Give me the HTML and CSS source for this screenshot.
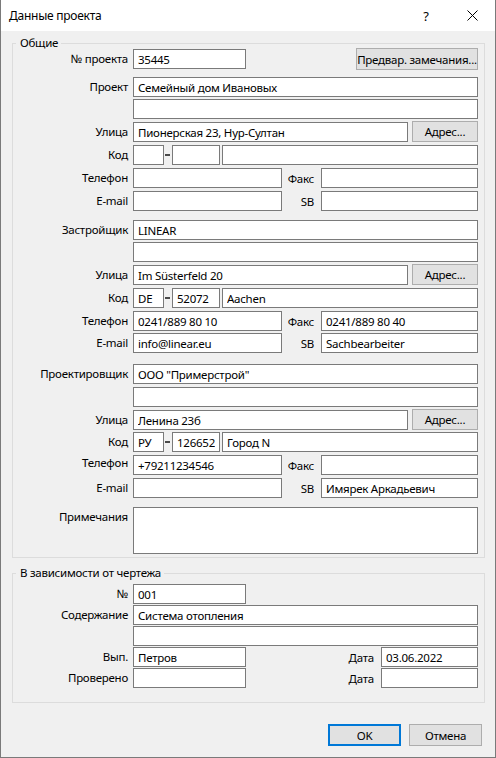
FILE: index.html
```html
<!DOCTYPE html>
<html lang="ru">
<head>
<meta charset="utf-8">
<title>Данные проекта</title>
<link rel="stylesheet" href="styles.css">
</head>
<body>
<div class="window">
  <div class="titlebar">
    <span class="title">Данные проекта</span>
    <span class="cap help">?</span>
    <span class="cap"><svg class="close" width="11" height="11" viewBox="0 0 11 11"><path d="M0.5 0.5L10.5 10.5M10.5 0.5L0.5 10.5" stroke="#000" stroke-width="1" fill="none"/></svg></span>
  </div>
  <div class="content">
    <fieldset class="group g1">
      <legend>Общие</legend>
      <div class="row mt0">
        <span class="lbl">№ проекта</span>
        <input class="f w113" value="35445">
        <button class="btn b-notes">Предвар. замечания...</button>
      </div>
      <div class="row mt8">
        <span class="lbl">Проект</span>
        <input class="f grow" value="Семейный дом Ивановых">
      </div>
      <div class="row mt2">
        <span class="lbl"></span>
        <input class="f grow" value="">
      </div>
      <div class="row">
        <span class="lbl">Улица</span>
        <input class="f w275" value="Пионерская 23, Нур-Султан">
        <button class="btn b-addr">Адрес...</button>
      </div>
      <div class="row">
        <span class="lbl">Код</span>
        <input class="f w31" value="">
        <span class="dash"></span>
        <input class="f w48" value="">
        <input class="f grow city" value="">
      </div>
      <div class="row">
        <span class="lbl">Телефон</span>
        <input class="f w149" value="">
        <span class="lbl2">Факс</span>
        <input class="f grow" value="">
      </div>
      <div class="row">
        <span class="lbl">E-mail</span>
        <input class="f w149" value="">
        <span class="lbl2">SB</span>
        <input class="f grow" value="">
      </div>

      <div class="row mt9">
        <span class="lbl">Застройщик</span>
        <input class="f grow" value="LINEAR">
      </div>
      <div class="row mt2">
        <span class="lbl"></span>
        <input class="f grow" value="">
      </div>
      <div class="row">
        <span class="lbl">Улица</span>
        <input class="f w275" value="Im Süsterfeld 20">
        <button class="btn b-addr">Адрес...</button>
      </div>
      <div class="row">
        <span class="lbl">Код</span>
        <input class="f w31" value="DE">
        <span class="dash"></span>
        <input class="f w48" value="52072">
        <input class="f grow city" value="Aachen">
      </div>
      <div class="row">
        <span class="lbl">Телефон</span>
        <input class="f w149" value="0241/889 80 10">
        <span class="lbl2">Факс</span>
        <input class="f grow" value="0241/889 80 40">
      </div>
      <div class="row mt2">
        <span class="lbl">E-mail</span>
        <input class="f w149" value="info@linear.eu">
        <span class="lbl2">SB</span>
        <input class="f grow" value="Sachbearbeiter">
      </div>

      <div class="row mt11">
        <span class="lbl">Проектировщик</span>
        <input class="f grow" value="ООО &quot;Примерстрой&quot;">
      </div>
      <div class="row">
        <span class="lbl"></span>
        <input class="f grow" value="">
      </div>
      <div class="row">
        <span class="lbl">Улица</span>
        <input class="f w275" value="Ленина 23б">
        <button class="btn b-addr">Адрес...</button>
      </div>
      <div class="row mt2">
        <span class="lbl">Код</span>
        <input class="f w31" value="РУ">
        <span class="dash"></span>
        <input class="f w48" value="126652">
        <input class="f grow city" value="Город N">
      </div>
      <div class="row">
        <span class="lbl up">Телефон</span>
        <input class="f w149" value="+79211234546">
        <span class="lbl2">Факс</span>
        <input class="f grow" value="">
      </div>
      <div class="row">
        <span class="lbl">E-mail</span>
        <input class="f w149" value="">
        <span class="lbl2">SB</span>
        <input class="f grow" value="Имярек Аркадьевич">
      </div>
      <div class="row row-notes mt9">
        <span class="lbl">Примечания</span>
        <textarea class="f grow notes"></textarea>
      </div>
    </fieldset>

    <fieldset class="group g2">
      <legend>В зависимости от чертежа</legend>
      <div class="row mt0">
        <span class="lbl">№</span>
        <input class="f w113" value="001">
      </div>
      <div class="row mt1">
        <span class="lbl">Содержание</span>
        <input class="f grow" value="Система отопления">
      </div>
      <div class="row mt1">
        <span class="lbl"></span>
        <input class="f grow" value="">
      </div>
      <div class="row mt1">
        <span class="lbl">Вып.</span>
        <input class="f w113" value="Петров">
        <span class="lbl3">Дата</span>
        <input class="f w97" value="03.06.2022">
      </div>
      <div class="row mt1">
        <span class="lbl">Проверено</span>
        <input class="f w113" value="">
        <span class="lbl3">Дата</span>
        <input class="f w97" value="">
      </div>
    </fieldset>

    <div class="footer">
      <button class="btn b-dlg b-ok">OK</button>
      <button class="btn b-dlg">Отмена</button>
    </div>
  </div>
</div>
</body>
</html>
```

FILE: styles.css
```css
* { box-sizing: border-box; }
html, body { margin: 0; padding: 0; }
body {
  font-family: "Noto Sans", "Liberation Sans", sans-serif;
  font-size: 11.5px;
  letter-spacing: -0.25px;
  color: #000;
  background: #f0f0f0;
}
.window {
  width: 496px;
  height: 758px;
  border: 1px solid #7a7a7a;
  border-top: none;
  background: #f0f0f0;
  display: flex;
  flex-direction: column;
}
.titlebar {
  height: 31px;
  flex: none;
  background: #fff;
  display: flex;
  align-items: center;
  padding-left: 8px;
}
.title { flex: 1; font-size: 12px; }
.cap {
  width: 46px;
  height: 31px;
  display: flex;
  align-items: center;
  justify-content: center;
}
.help { font-size: 13px; }
.close { display: block; }

.content {
  flex: 1;
  display: flex;
  flex-direction: column;
  padding: 6px 10px 0 11px;
}
.group {
  margin: 0;
  padding: 0 6px 3px 0;
  border: 1px solid #dcdcdc;
  min-width: 0;
}
.group legend {
  margin-left: 3px;
  padding: 0 3px 0 4px;
  font-size: 11.5px;
  line-height: 12px;
}
.g2 {
  margin-top: 9px;
  padding-top: 5px;
  padding-bottom: 14px;
}

.row {
  display: flex;
  align-items: center;
  height: 20px;
  margin-top: 3px;
}
.mt0 { margin-top: 0; }
.mt1 { margin-top: 1px; }
.mt2 { margin-top: 2px; }
.mt8 { margin-top: 8px; }
.mt9 { margin-top: 9px; }
.mt11 { margin-top: 11px; }

.lbl {
  flex: none;
  width: 115px;
  margin-right: 5px;
  text-align: right;
  white-space: nowrap;
  line-height: 20px;
}
.lbl.up {
  align-self: flex-start;
  line-height: 16px;
}
.lbl2 {
  flex: none;
  width: 32px;
  margin-right: 7px;
  text-align: right;
  white-space: nowrap;
}
.lbl3 {
  flex: none;
  margin-left: auto;
  margin-right: 7px;
  white-space: nowrap;
}

.f {
  flex: none;
  height: 20px;
  margin: 0;
  padding: 0 4px;
  border: 1px solid #7a7a7a;
  border-radius: 0;
  background: #fff;
  color: #000;
  font-family: "Noto Sans", "Liberation Sans", sans-serif;
  font-size: 11.5px;
  letter-spacing: -0.25px;
  outline: none;
  min-width: 0;
}
.grow { flex: 1; }
.w31 { width: 31px; }
.w48 { width: 48px; }
.w97 { width: 97px; }
.w113 { width: 113px; }
.w149 { width: 149px; }
.w275 { width: 275px; }
.city { margin-left: 2px; }

.dash {
  flex: none;
  width: 5px;
  height: 2px;
  margin: 0 2px 0 1px;
  background: #4a4a4a;
}

.row-notes {
  height: auto;
  align-items: flex-start;
}
.notes {
  height: 47px;
  resize: none;
  display: block;
}

.btn {
  height: 21px;
  margin: 0;
  padding: 0;
  border: 1px solid #adadad;
  border-radius: 0;
  background: #e1e1e1;
  color: #000;
  font-family: "Noto Sans", "Liberation Sans", sans-serif;
  font-size: 11.5px;
  letter-spacing: -0.25px;
  white-space: nowrap;
}
.b-notes {
  margin-left: auto;
  width: 122px;
  height: 22px;
}
.b-addr {
  width: 66px;
  margin-left: 4px;
  align-self: flex-start;
  margin-top: -1px;
}

.footer {
  display: flex;
  justify-content: flex-end;
  gap: 8px;
  margin-top: 21px;
  margin-right: 3px;
}
.b-dlg {
  width: 73px;
  height: 22px;
}
.b-ok {
  border: 2px solid #0078d7;
}
```
